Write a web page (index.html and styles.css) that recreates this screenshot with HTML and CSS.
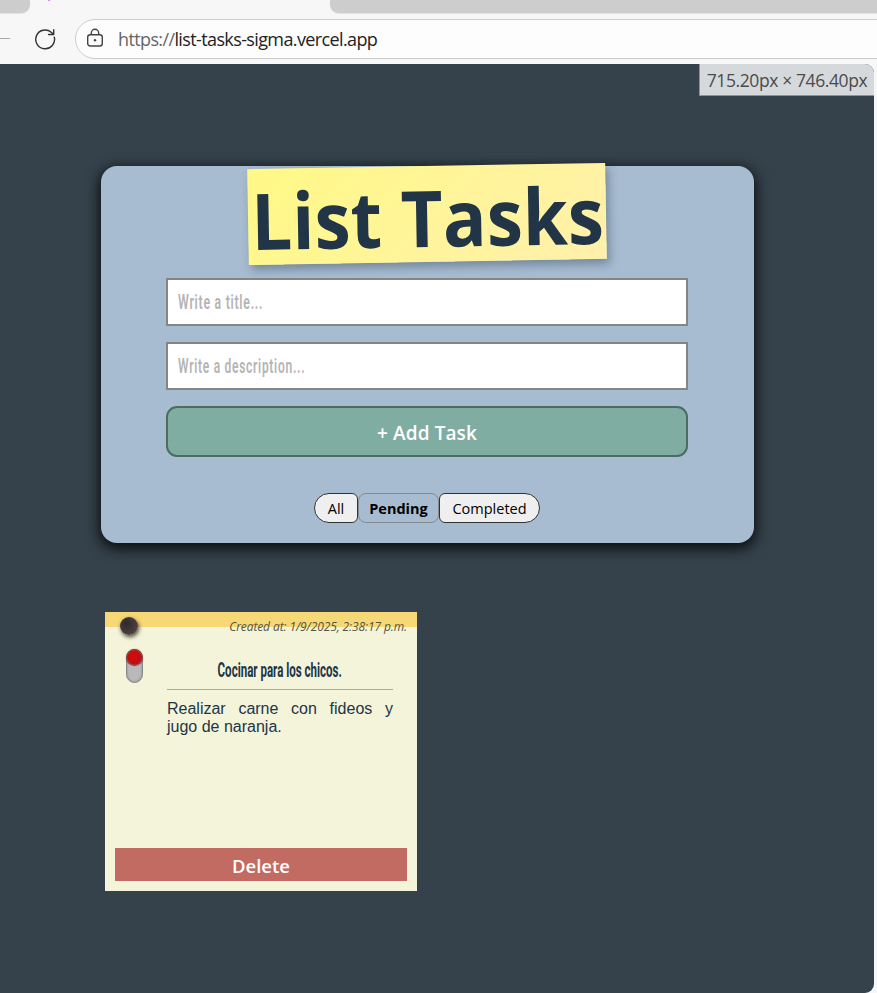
FILE: index.html
```
<!DOCTYPE html>
<html lang="en">
<head>
<meta charset="utf-8">
<title>List Tasks</title>
<link rel="stylesheet" href="styles.css">
</head>
<body>
<header class="browser">
  <div class="tabs"><div class="tab tab-left"></div><div class="tab-active"><i class="favicon"></i></div><div class="tab tab-right"></div></div>
  <div class="toolbar">
    <svg class="back" width="10" height="20" viewBox="0 0 10 20"><path d="M0 10.5H10" stroke="#aaa" fill="none"/></svg>
    <svg class="reload" width="22" height="22" viewBox="0 0 22 22" fill="none" stroke="#333" stroke-width="1.4" stroke-linecap="round" stroke-linejoin="round"><path d="M20.3 9.2A9.4 9.4 0 1 1 17.2 4.2L19.6 6.3M19.7 1.7V6.5H14.6"/></svg>
    <div class="address">
      <svg class="lock" width="18" height="20" viewBox="0 0 18 20" fill="none" stroke="#444" stroke-width="1.4"><rect x="1.7" y="6.7" width="14.6" height="11.3" rx="2.5"/><path d="M5.3 6.5V5a3.7 3.7 0 0 1 7.4 0V6.5"/><circle cx="9" cy="12.3" r="1.2" fill="#444" stroke="none"/></svg>
      <span class="url"><span class="scheme">https://</span>list-tasks-sigma.vercel.app</span>
    </div>
  </div>
</header>
<main class="page">
  <div class="size-tip"><span>715.20px × 746.40px</span></div>
  <section class="panel">
    <h1 class="title"><span>List Tasks</span></h1>
    <div class="form">
      <div class="field"><span class="hint hint-title">Write a title...</span></div>
      <div class="field"><span class="hint hint-desc">Write a description...</span></div>
      <button class="add"><span>+ Add Task</span></button>
    </div>
    <div class="filters">
      <button class="filter all"><span>All</span></button>
      <button class="filter pending"><span>Pending</span></button>
      <button class="filter completed"><span>Completed</span></button>
    </div>
  </section>
  <article class="note">
    <div class="note-head"><i class="pin"></i><em class="created">Created at: 1/9/2025, 2:38:17 p.m.</em></div>
    <div class="note-body">
      <div class="switch"><i class="knob"></i></div>
      <div class="task">
        <h2 class="task-title"><span>Cocinar para los chicos.</span></h2>
        <p class="task-text">Realizar carne con fideos y jugo de naranja.</p>
      </div>
    </div>
    <button class="delete"><span>Delete</span></button>
  </article>
</main>
</body>
</html>
```
FILE: styles.css
```
* { box-sizing: border-box; }
body { margin: 0; width: 877px; height: 993px; overflow: hidden; background: #f7f7f7; font-family: "Open Sans", "Noto Sans", sans-serif; }
button { font: inherit; padding: 0; display: flex; align-items: center; justify-content: center; }
span { white-space: nowrap; }

.browser { height: 64px; overflow: hidden; }
.tabs { display: flex; height: 14px; }
.tab { background: #cdcdcd; border-bottom: 1px solid #e2e2e2; }
.tab-left { width: 30px; border-bottom-right-radius: 9px; }
.tab-active { width: 300px; }
.favicon { display: block; width: 2px; height: 1px; margin-left: 18px; background: #d58bf0; }
.tab-right { flex: 1; border-bottom-left-radius: 9px; }
.toolbar { display: flex; height: 50px; padding-top: 5px; align-items: flex-start; }
.back { flex: none; margin-top: 9px; }
.reload { flex: none; margin: 9px 0 0 24px; }
.address { display: flex; align-items: center; width: 830px; flex: none; height: 40px; margin-left: 19px; padding-left: 10px; border: 1px solid #cdcdcd; border-radius: 20px; background: #fdfdfd; }
.lock { flex: none; margin-top: -2px; }
.url { margin-left: 14px; font-size: 18px; letter-spacing: -0.62px; color: #222; }
.scheme { color: #666; }

.page { width: 874px; height: 929px; background: #35424b; border-radius: 0 9px 9px 0; padding: 0 0 0 101px; overflow: hidden; }
.size-tip { display: flex; align-items: center; justify-content: center; width: 175px; height: 32px; margin-left: 598px; background: #d5d9dc; border: 1px solid #89939a; border-width: 0 0 1px 1px; font-size: 17.5px; letter-spacing: -0.4px; color: #4b4b4b; }

.panel { width: 653px; height: 377px; margin-top: 70px; padding: 0 66px 0 65px; border-radius: 16px; background: #a8bcd1; box-shadow: 0 4px 14px 2px rgba(0,0,0,.8); display: flow-root; }
.title { display: flex; align-items: center; justify-content: center; width: 358px; height: 96px; margin: 0 auto; transform: rotate(-1deg); background: linear-gradient(135deg, #fff986, #fff1ac); box-shadow: 3px 5px 10px rgba(20,40,60,.35); color: #213547; font-size: 78px; line-height: 1; }
.title span { transform: translateY(3px) scaleX(.93); }
.form { display: grid; grid-template-rows: 48px 48px 51px; gap: 16px; margin-top: 16px; }
.field { display: flex; align-items: center; padding-left: 10px; border: 2px solid #858585; background: #fff; color: #b4b4b4; }
.hint { font: 600 20px/1 Roboto, sans-serif; letter-spacing: 1.2px; transform-origin: left; }
.hint-title { transform: scaleX(.615); }
.hint-desc { transform: scaleX(.6); }
.add { border: 2px solid #4c6b63; border-radius: 11px; background: #80ada2; color: #fff; font-size: 19px; font-weight: 600; padding-top: 2px; }
.add span { letter-spacing: .1px; }
.filters { display: flex; justify-content: center; margin-top: 36px; }
.filter { height: 30px; border: 1px solid #333; background: #efefef; color: #000; font-size: 14.5px; font-weight: 500; }
.all { width: 44px; border-radius: 15px 6px 6px 15px; }
.pending { width: 81px; border-color: #858b93; border-radius: 8px; background: transparent; font-weight: 700; }
.completed { width: 101px; border-radius: 6px 15px 15px 6px; }

.note { display: flex; flex-direction: column; width: 312px; height: 279px; margin: 69px 0 0 4px; padding: 0 10px 10px; background: linear-gradient(#f7d876 15px, #f4f4da 15px); }
.note-head { display: flex; justify-content: space-between; height: 30px; padding: 5px 0 0 5px; }
.pin { width: 18px; height: 18px; border-radius: 50%; background: radial-gradient(circle at 35% 35%, #30292c, #5a484b); box-shadow: 1px 2px 4px rgba(0,0,0,.75); }
.created { font-size: 12px; line-height: 19px; letter-spacing: -.1px; white-space: nowrap; color: #555540; }
.note-body { display: flex; flex: 1; padding-left: 11px; }
.switch { width: 17px; height: 34px; margin-top: 7px; border: 1px solid #888; border-radius: 9px; background: #b9b9b9; box-shadow: inset 0 0 2px #777; }
.knob { display: block; width: 15px; height: 15px; border-radius: 50%; background: radial-gradient(circle at 40% 40%, #d40a0a, #b31319); box-shadow: 0 0 1px 1px #7c3535; }
.task { width: 226px; margin-left: 24px; }
.task-title { display: flex; justify-content: center; align-items: center; height: 48px; margin: 0; padding-top: 9px; border-bottom: 1px solid #aeaa98; color: #213547; font: 700 20px/1 Roboto, sans-serif; }
.task-title span { transform: scaleX(.577); }
.task-text { margin: 10px 0 0; font: 16px/18px "Liberation Sans", sans-serif; text-align: justify; color: #213547; }
.delete { height: 33px; padding-top: 2px; border: 0; background: #c26b63; color: #fff; font-size: 18.5px; font-weight: 600; }
```
